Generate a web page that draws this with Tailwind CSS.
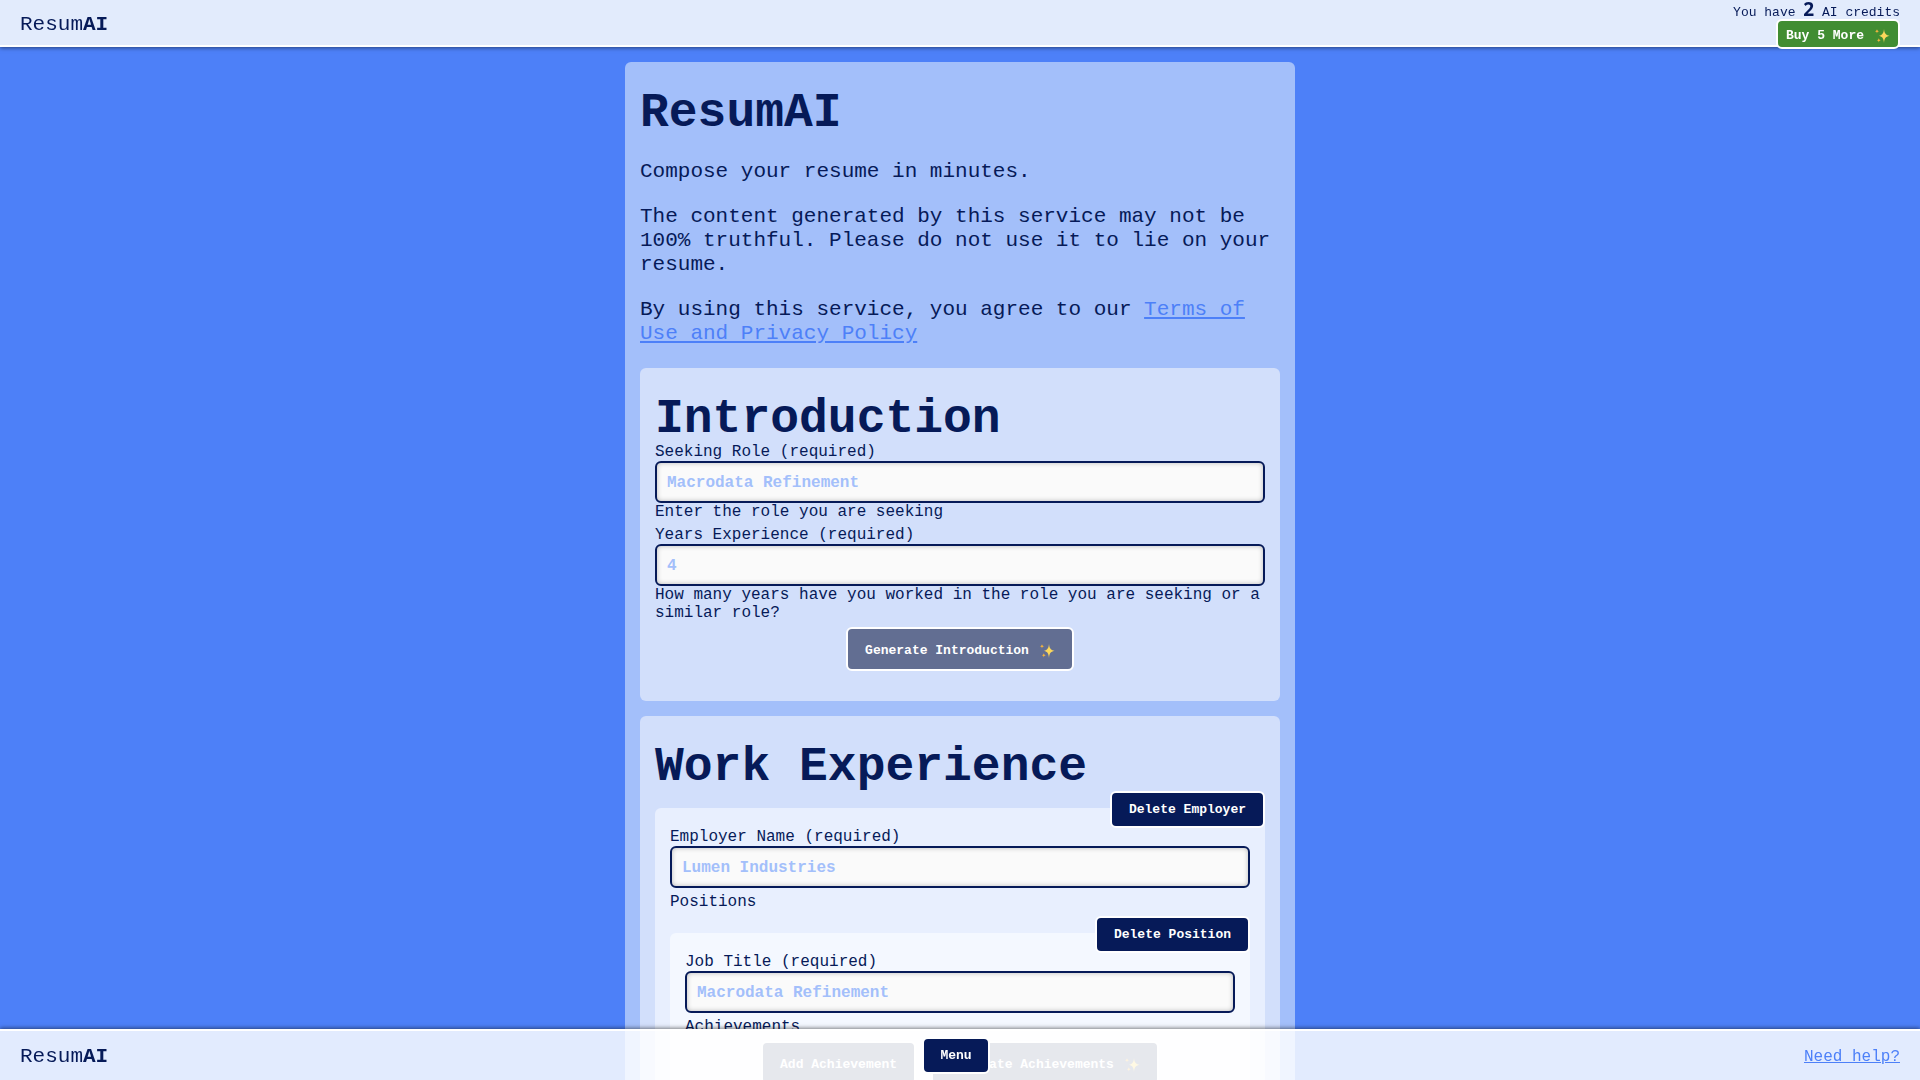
<!DOCTYPE html>
<html lang="en">
<head>
<meta charset="utf-8">
<meta name="viewport" content="width=device-width, initial-scale=1">
<title>ResumAI</title>
<script src="https://cdn.jsdelivr.net/npm/@tailwindcss/browser@4"></script>
</head>
<body class="bg-[#4d80f8] font-['Liberation_Mono',monospace] text-base leading-[18px] text-[#061a58]">
<svg class="hidden" aria-hidden="true">
  <symbol id="sparkles" viewBox="0 0 16 16">
    <path fill="#fbd75b" d="M10 1c.5 4.200 1.300 5.800 5.500 6.800C11.300 8.800 10.500 10.400 10 15 9.500 10.400 8.700 8.800 5 7.800 8.700 6.800 9.500 5.200 10 1z"/>
    <path fill="#f3b33f" d="M3 1c.2 1.500.7 2 2.200 2.300C3.700 3.600 3.200 4.100 3 5.600 2.800 4.100 2.300 3.600.8 3.300 2.300 3 2.800 2.500 3 1zM4.800 10c.2 1.500.7 2 2.100 2.300-1.400.3-1.900.8-2.100 2.300-.2-1.500-.7-2-2.100-2.300 1.400-.3 1.900-.8 2.100-2.300z"/>
  </symbol>
</svg>

<header class="fixed inset-x-0 top-0 z-20 flex h-[47px] items-start justify-between border-b-2 border-white bg-[#e2ebfc] px-5 shadow-[0_1px_4px_rgba(0,0,0,0.5)]">
  <div class="pt-[13px] text-[21px] leading-6">Resum<b>AI</b></div>
  <div class="flex flex-col items-end">
    <p class="h-[19px] text-[13px] leading-4">You have <b class="font-['Noto_Sans',sans-serif] text-[19px] leading-none">2</b> AI credits</p>
    <button type="button" class="flex h-[30px] items-center gap-[10px] rounded-md border-2 border-white bg-[#418d32] px-2 pt-[3px] text-[13px] font-bold text-white">Buy 5 More <svg class="size-4"><use href="#sparkles"/></svg></button>
  </div>
</header>

<main class="mx-auto mt-[62px] mb-20 w-full max-w-[670px] rounded-md bg-[#a3bffa] p-[15px]">
  <h1 class="mt-3 text-5xl leading-[48px] font-bold">ResumAI</h1>
  <div class="mt-[23px] space-y-[21px] text-[21px] leading-6">
    <p>Compose your resume in minutes.</p>
    <p>The content generated by this service may not be 100% truthful. Please do not use it to lie on your resume.</p>
    <p>By using this service, you agree to our <a href="#terms" class="text-[#4d80f8] underline">Terms of Use and Privacy Policy</a></p>
  </div>

  <section class="mt-[22px] rounded-md bg-[#d2dffb] px-[15px] pt-[27px] pb-[30px]">
    <h2 class="text-5xl leading-[48px] font-bold">Introduction</h2>
    <div>
      <label for="role" class="block">Seeking Role (required)</label>
      <input id="role" type="text" placeholder="Macrodata Refinement" class="block h-[42px] w-full rounded-md border-2 border-[#061a58] bg-[#fafafa] px-[10px] pt-px font-bold shadow-[inset_0_0_5px_rgba(0,0,0,0.25)] placeholder:text-[#a3bffa]">
      <p>Enter the role you are seeking</p>
    </div>
    <div class="mt-[5px]">
      <label for="years" class="block">Years Experience (required)</label>
      <input id="years" type="text" placeholder="4" class="block h-[42px] w-full rounded-md border-2 border-[#061a58] bg-[#fafafa] px-[10px] pt-px font-bold shadow-[inset_0_0_5px_rgba(0,0,0,0.25)] placeholder:text-[#a3bffa]">
      <p>How many years have you worked in the role you are seeking or a similar role?</p>
    </div>
    <div class="mt-[5px] flex justify-center">
      <button type="button" class="flex h-[44px] items-center gap-[10px] rounded-md border-2 border-white bg-[#626e92] px-[17px] pt-[3px] text-[13px] font-bold text-white">Generate Introduction <svg class="size-4"><use href="#sparkles"/></svg></button>
    </div>
  </section>

  <section class="mt-[15px] rounded-md bg-[#d2dffb] px-[15px] pt-[27px] pb-[30px]">
    <h2 class="text-5xl leading-[48px] font-bold">Work Experience</h2>
    <div class="relative mt-[17px] rounded-md bg-[#e8effe] px-[15px] pt-5 pb-[15px]">
      <button type="button" class="absolute -top-[17px] right-0 h-[37px] rounded-md border-2 border-white bg-[#061a58] px-[17px] text-[13px] font-bold text-white">Delete Employer</button>
      <label for="employer" class="block">Employer Name (required)</label>
      <input id="employer" type="text" placeholder="Lumen Industries" class="block h-[42px] w-full rounded-md border-2 border-[#061a58] bg-[#fafafa] px-[10px] pt-px font-bold shadow-[inset_0_0_5px_rgba(0,0,0,0.25)] placeholder:text-[#a3bffa]">
      <h3 class="mt-[5px]">Positions</h3>
      <div class="relative mt-[22px] rounded-md bg-[#f4f8ff] px-[15px] pt-5 pb-[15px]">
        <button type="button" class="absolute -top-[17px] right-0 h-[37px] rounded-md border-2 border-white bg-[#061a58] px-[17px] text-[13px] font-bold text-white">Delete Position</button>
        <label for="job" class="block">Job Title (required)</label>
        <input id="job" type="text" placeholder="Macrodata Refinement" class="block h-[42px] w-full rounded-md border-2 border-[#061a58] bg-[#fafafa] px-[10px] pt-px font-bold shadow-[inset_0_0_5px_rgba(0,0,0,0.25)] placeholder:text-[#a3bffa]">
        <h4 class="mt-[5px]">Achievements</h4>
        <div class="mt-[5px] flex h-[44px] justify-center gap-[15px]">
          <button type="button" class="rounded-md border-2 border-white bg-[#626e92] px-[17px] pt-[3px] text-[13px] font-bold text-white">Add Achievement</button>
          <button type="button" class="flex items-center gap-[10px] rounded-md border-2 border-white bg-[#626e92] px-[17px] pt-[3px] text-[13px] font-bold text-white">Generate Achievements <svg class="size-4"><use href="#sparkles"/></svg></button>
        </div>
      </div>
    </div>
  </section>
</main>

<footer class="fixed inset-x-0 bottom-0 z-20 grid h-[51px] grid-cols-[1fr_auto_1fr] items-center border-t-2 border-white bg-white/84 px-5 shadow-[0_-1px_4px_rgba(0,0,0,0.5)]">
  <div class="pt-[3px] text-[21px] leading-6">Resum<b>AI</b></div>
  <button type="button" class="mr-2 h-[37px] rounded-md border-2 border-white bg-[#061a58] px-4 text-[13px] font-bold text-white">Menu</button>
  <a href="#help" class="justify-self-end pt-[2px] text-[#4d80f8] underline">Need help?</a>
</footer>
</body>
</html>
